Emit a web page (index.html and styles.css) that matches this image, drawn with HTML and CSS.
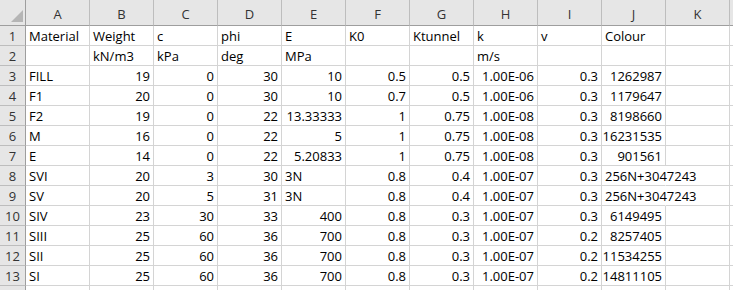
FILE: index.html
```html
<!DOCTYPE html>
<html>
<head>
<meta charset="utf-8">
<link rel="stylesheet" href="styles.css">
</head>
<body>
<div class="frame">
<div class="sheet">
  <div class="c corner"><svg width="12" height="12" viewBox="0 0 12 12"><polygon points="12,0 12,12 0,12" fill="#b5b5b5"/></svg></div>
  <div class="c ch">A</div><div class="c ch">B</div><div class="c ch">C</div><div class="c ch">D</div><div class="c ch">E</div><div class="c ch">F</div><div class="c ch">G</div><div class="c ch">H</div><div class="c ch">I</div><div class="c ch">J</div><div class="c ch">K</div><div class="c ch last"></div>

  <div class="c rh">1</div><div class="c">Material</div><div class="c">Weight</div><div class="c">c</div><div class="c">phi</div><div class="c">E</div><div class="c">K0</div><div class="c">Ktunnel</div><div class="c">k</div><div class="c">v</div><div class="c">Colour</div><div class="c"></div><div class="c"></div>

  <div class="c rh">2</div><div class="c"></div><div class="c">kN/m3</div><div class="c">kPa</div><div class="c">deg</div><div class="c">MPa</div><div class="c"></div><div class="c"></div><div class="c">m/s</div><div class="c"></div><div class="c"></div><div class="c"></div><div class="c"></div>

  <div class="c rh">3</div><div class="c">FILL</div><div class="c n">19</div><div class="c n">0</div><div class="c n">30</div><div class="c n">10</div><div class="c n">0.5</div><div class="c n">0.5</div><div class="c n">1.00E-06</div><div class="c n">0.3</div><div class="c n">1262987</div><div class="c"></div><div class="c"></div>

  <div class="c rh">4</div><div class="c">F1</div><div class="c n">20</div><div class="c n">0</div><div class="c n">30</div><div class="c n">10</div><div class="c n">0.7</div><div class="c n">0.5</div><div class="c n">1.00E-06</div><div class="c n">0.3</div><div class="c n">1179647</div><div class="c"></div><div class="c"></div>

  <div class="c rh">5</div><div class="c">F2</div><div class="c n">19</div><div class="c n">0</div><div class="c n">22</div><div class="c n">13.33333</div><div class="c n">1</div><div class="c n">0.75</div><div class="c n">1.00E-08</div><div class="c n">0.3</div><div class="c n">8198660</div><div class="c"></div><div class="c"></div>

  <div class="c rh">6</div><div class="c">M</div><div class="c n">16</div><div class="c n">0</div><div class="c n">22</div><div class="c n">5</div><div class="c n">1</div><div class="c n">0.75</div><div class="c n">1.00E-08</div><div class="c n">0.3</div><div class="c n">16231535</div><div class="c"></div><div class="c"></div>

  <div class="c rh">7</div><div class="c">E</div><div class="c n">14</div><div class="c n">0</div><div class="c n">22</div><div class="c n">5.20833</div><div class="c n">1</div><div class="c n">0.75</div><div class="c n">1.00E-08</div><div class="c n">0.3</div><div class="c n">901561</div><div class="c"></div><div class="c"></div>

  <div class="c rh">8</div><div class="c">SVI</div><div class="c n">20</div><div class="c n">3</div><div class="c n">30</div><div class="c">3N</div><div class="c n">0.8</div><div class="c n">0.4</div><div class="c n">1.00E-07</div><div class="c n">0.3</div><div class="c spill">256N+3047243</div><div class="c"></div><div class="c"></div>

  <div class="c rh">9</div><div class="c">SV</div><div class="c n">20</div><div class="c n">5</div><div class="c n">31</div><div class="c">3N</div><div class="c n">0.8</div><div class="c n">0.4</div><div class="c n">1.00E-07</div><div class="c n">0.3</div><div class="c spill">256N+3047243</div><div class="c"></div><div class="c"></div>

  <div class="c rh">10</div><div class="c">SIV</div><div class="c n">23</div><div class="c n">30</div><div class="c n">33</div><div class="c n">400</div><div class="c n">0.8</div><div class="c n">0.3</div><div class="c n">1.00E-07</div><div class="c n">0.3</div><div class="c n">6149495</div><div class="c"></div><div class="c"></div>

  <div class="c rh">11</div><div class="c">SIII</div><div class="c n">25</div><div class="c n">60</div><div class="c n">36</div><div class="c n">700</div><div class="c n">0.8</div><div class="c n">0.3</div><div class="c n">1.00E-07</div><div class="c n">0.2</div><div class="c n">8257405</div><div class="c"></div><div class="c"></div>

  <div class="c rh">12</div><div class="c">SII</div><div class="c n">25</div><div class="c n">60</div><div class="c n">36</div><div class="c n">700</div><div class="c n">0.8</div><div class="c n">0.3</div><div class="c n">1.00E-07</div><div class="c n">0.2</div><div class="c n">11534255</div><div class="c"></div><div class="c"></div>

  <div class="c rh">13</div><div class="c">SI</div><div class="c n">25</div><div class="c n">60</div><div class="c n">36</div><div class="c n">700</div><div class="c n">0.8</div><div class="c n">0.3</div><div class="c n">1.00E-07</div><div class="c n">0.2</div><div class="c n">14811105</div><div class="c"></div><div class="c"></div>

  <div class="c rh"></div><div class="c"></div><div class="c"></div><div class="c"></div><div class="c"></div><div class="c"></div><div class="c"></div><div class="c"></div><div class="c"></div><div class="c"></div><div class="c"></div><div class="c"></div><div class="c"></div>
</div>
</div>
</body>
</html>
```
FILE: styles.css
```css
html, body {
  margin: 0;
  padding: 0;
  background: #ffffff;
  overflow: hidden;
}

.frame {
  width: 733px;
  height: 290px;
  overflow: hidden;
}

.sheet {
  display: grid;
  grid-template-columns: 26px repeat(11, 64px) 21px;
  grid-template-rows: 26px;
  grid-auto-rows: 20px;
  font-family: "Open Sans", "Liberation Sans", sans-serif;
  font-size: 13px;
  color: #000000;
}

.c {
  box-sizing: border-box;
  border-right: 1px solid #d4d4d4;
  border-bottom: 1px solid #d4d4d4;
  padding: 1px 3px 0 3px;
  display: flex;
  align-items: center;
  white-space: nowrap;
  overflow: visible;
  line-height: 1;
}

.n {
  justify-content: flex-end;
}

.spill {
  border-right-color: transparent;
}

.ch {
  background: #e6e6e6;
  border-right: 1px solid #bdbdbd;
  border-bottom: 1px solid #9e9e9e;
  justify-content: center;
  color: #333333;
  padding-top: 4px;
}

.ch.last {
  border-right: none;
}

.rh {
  background: #e6e6e6;
  border-right: 1px solid #9e9e9e;
  border-bottom: 1px solid #bdbdbd;
  justify-content: center;
  color: #333333;
  padding: 1px 0 0 0;
}

.corner {
  background: #e6e6e6;
  border-right: 1px solid #9e9e9e;
  border-bottom: 1px solid #9e9e9e;
  padding: 0 2px 3px 0;
  align-items: flex-end;
  justify-content: flex-end;
}
```
